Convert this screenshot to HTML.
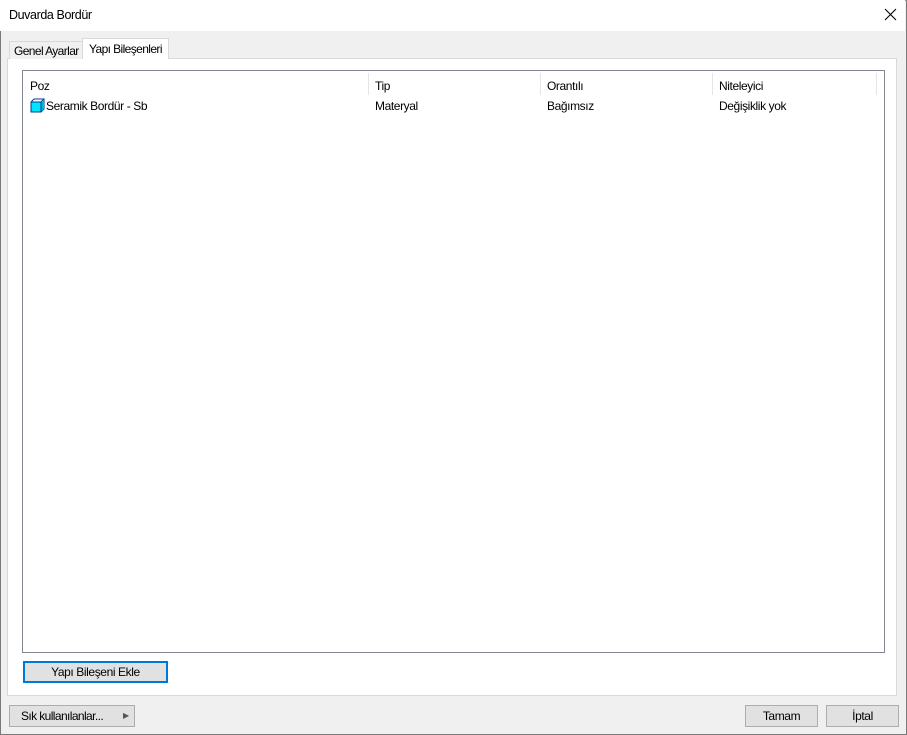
<!DOCTYPE html>
<html><head><meta charset="utf-8"><style>
*{box-sizing:border-box;margin:0;padding:0}
body{width:907px;height:735px;background:#f0f0f0;font-family:"Liberation Sans",Arial,sans-serif;font-size:12px;color:#000;position:relative;overflow:hidden;letter-spacing:-0.4px;white-space:nowrap}
.win{position:absolute;left:0;top:0;width:907px;height:735px;border:1px solid #7a7a7a;border-top:1px solid #999}
.title{position:absolute;left:0;top:0;width:905px;height:31px;background:#fff}
.title span{position:absolute;left:9px;top:8px;font-size:12.5px}
.x{position:absolute;left:884px;top:8px}
.abs{position:absolute}
.tab{position:absolute;border:1px solid #d9d9d9;border-bottom:none;background:#f0f0f0}
.panel{position:absolute;left:7px;top:58px;width:890px;height:638px;background:#fff;border:1px solid #d9d9d9}
.list{position:absolute;left:22px;top:70px;width:863px;height:583px;border:1px solid #828790;background:#fff}
.hs{position:absolute;top:2px;width:1px;height:22px;background:#e5e5e5}
.btn{position:absolute;background:#e1e1e1;border:1px solid #adadad;text-align:center;line-height:20px}
</style></head><body>
<div class="win"></div>
<div class="title"><span>Duvarda Bordür</span>
<svg class="x" width="13" height="13" viewBox="0 0 13 13"><path d="M1 1L12 12M12 1L1 12" stroke="#000" stroke-width="1.1"/></svg></div>
<div class="panel"></div>
<div class="tab" style="left:9px;top:41px;width:74px;height:18px;"><span class="abs" style="left:4px;top:2px;letter-spacing:-0.6px">Genel Ayarlar</span></div>
<div class="tab" style="left:82px;top:38px;width:87px;height:21px;background:#fff;border-color:#d9d9d9"><span class="abs" style="left:6px;top:3px;letter-spacing:-0.6px">Yapı Bileşenleri</span></div>
<div class="list">
<span class="abs" style="left:7px;top:8px">Poz</span>
<span class="abs" style="left:352px;top:8px">Tip</span>
<span class="abs" style="left:524px;top:8px">Orantılı</span>
<span class="abs" style="left:696px;top:8px">Niteleyici</span>
<div class="hs" style="left:345px"></div><div class="hs" style="left:517px"></div><div class="hs" style="left:689px"></div><div class="hs" style="left:853px"></div>
<svg class="abs" style="left:7px;top:27px" width="15" height="15" viewBox="0 0 15 15"><path d="M1 4h10v10H1z" fill="#00e5ff" stroke="#003c8f"/><path d="M1 4l3-3h10v10l-3 3M11 4l3-3" fill="none" stroke="#003c8f"/><path d="M11.5 4.5l2.5-2.5v9l-2.5 2.5z" fill="#00b8d4"/></svg>
<span class="abs" style="left:23px;top:28px">Seramik Bordür - Sb</span>
<span class="abs" style="left:352px;top:28px">Materyal</span>
<span class="abs" style="left:524px;top:28px">Bağımsız</span>
<span class="abs" style="left:696px;top:28px">Değişiklik yok</span>
</div>
<div class="btn" style="left:23px;top:661px;width:145px;height:22px;border:2px solid #0078d7;line-height:18px">Yapı Bileşeni Ekle</div>
<div class="btn" style="left:9px;top:705px;width:126px;height:22px;text-align:left;padding-left:11px;letter-spacing:-0.6px">Sık kullanılanlar...<span class="abs" style="left:113px;top:0;font-size:8px;color:#555">&#9654;</span></div>
<div class="btn" style="left:745px;top:705px;width:73px;height:22px">Tamam</div>
<div class="btn" style="left:826px;top:705px;width:73px;height:22px">İptal</div>
</body></html>
